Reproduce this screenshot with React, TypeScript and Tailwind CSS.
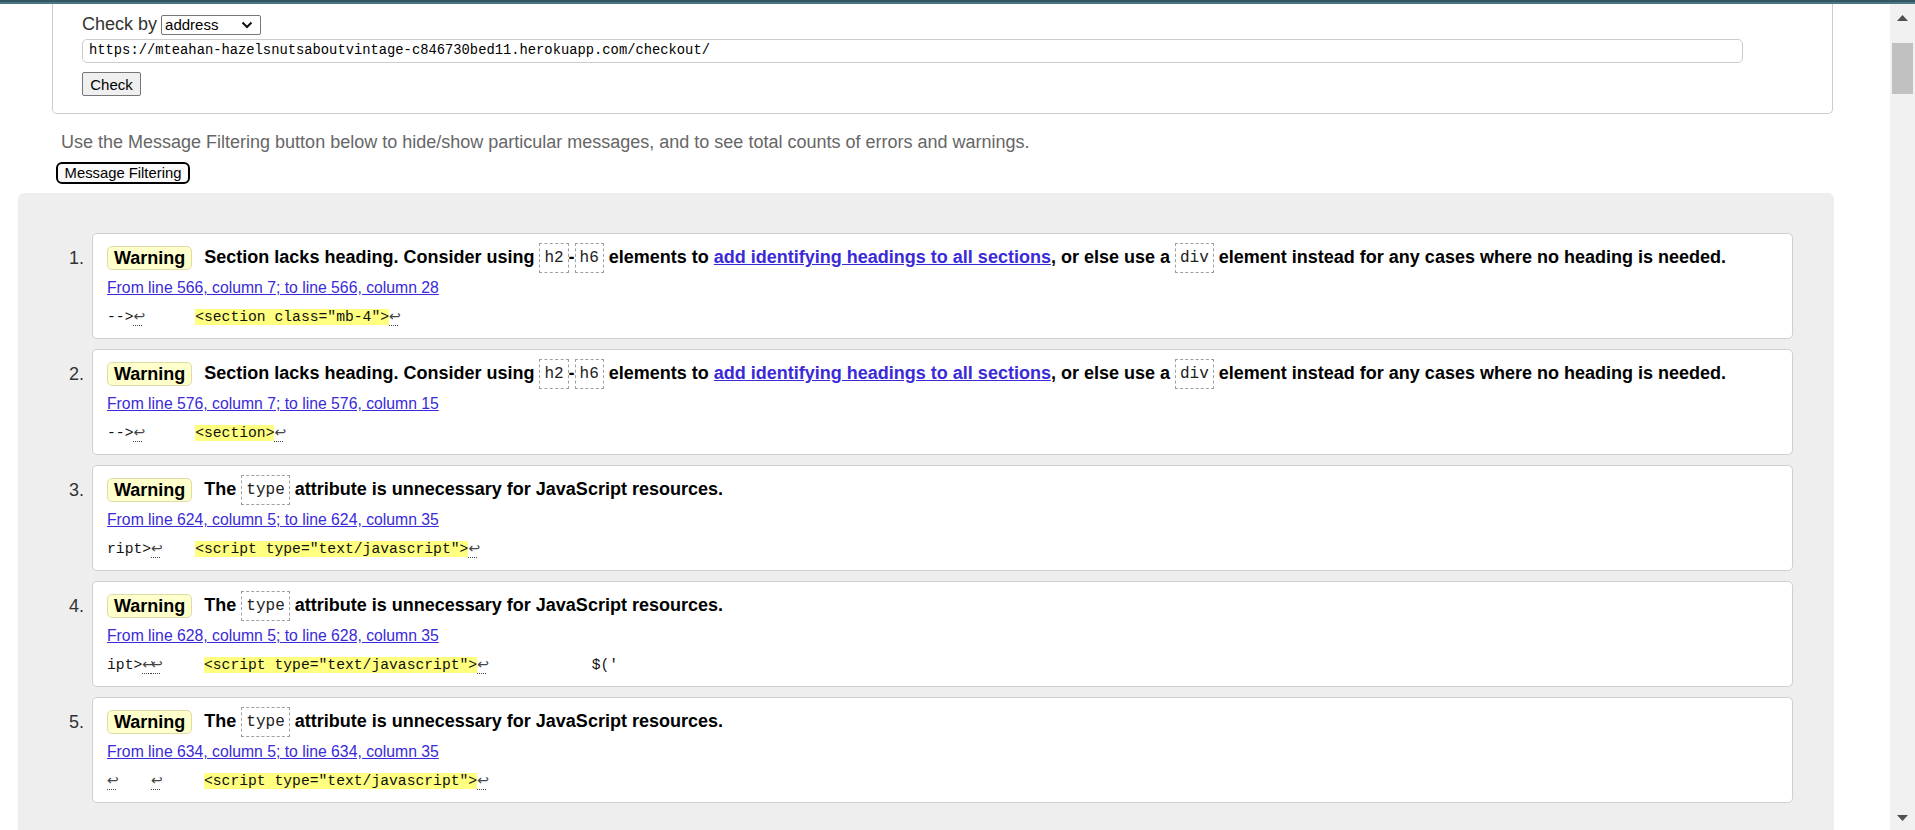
import type { ReactNode } from 'react'

type Seg = { t: string } | { nl: true } | { hl: string }

const NL: Seg = { nl: true }
const SCRIPT = '<script type="text/javascript">'

const results: { from: string; kind: 'section' | 'type'; extract: Seg[] }[] = [
  {
    from: 'From line 566, column 7; to line 566, column 28',
    kind: 'section',
    extract: [{ t: '-->' }, NL, { t: '      ' }, { hl: '<section class="mb-4">' }, NL],
  },
  {
    from: 'From line 576, column 7; to line 576, column 15',
    kind: 'section',
    extract: [{ t: '-->' }, NL, { t: '      ' }, { hl: '<section>' }, NL],
  },
  {
    from: 'From line 624, column 5; to line 624, column 35',
    kind: 'type',
    extract: [{ t: 'ript>' }, NL, { t: '    ' }, { hl: SCRIPT }, NL],
  },
  {
    from: 'From line 628, column 5; to line 628, column 35',
    kind: 'type',
    extract: [{ t: 'ipt>' }, NL, NL, { t: '     ' }, { hl: SCRIPT }, NL, { t: '            $(\'' }],
  },
  {
    from: 'From line 634, column 5; to line 634, column 35',
    kind: 'type',
    extract: [NL, { t: '    ' }, NL, { t: '     ' }, { hl: SCRIPT }, NL],
  },
]

function Code({ children }: { children: ReactNode }) {
  return (
    <code className="inline-block align-middle border border-dashed border-[#a0a0a0] px-[4px] py-[3px] font-['Liberation_Mono',monospace] text-[16px] leading-[22px] font-normal text-[#222]">
      {children}
    </code>
  )
}

function Message({ kind }: { kind: 'section' | 'type' }) {
  if (kind === 'type') {
    return (
      <span>
        The <Code>type</Code> attribute is unnecessary for JavaScript resources.
      </span>
    )
  }
  return (
    <span>
      Section lacks heading. Consider using <Code>h2</Code>-<Code>h6</Code> elements to{' '}
      <a className="text-[#3a2ad8] underline">add identifying headings to all sections</a>, or else use a{' '}
      <Code>div</Code> element instead for any cases where no heading is needed.
    </span>
  )
}

function Extract({ segs }: { segs: Seg[] }) {
  return (
    <code className="whitespace-pre font-['Liberation_Mono',monospace] text-[14.7px] leading-[20px] text-[#111]">
      {segs.map((s, i) =>
        'nl' in s ? (
          <b
            key={i}
            className="inline-block w-[8.8px] font-normal font-['DejaVu_Sans',sans-serif] text-[14px] leading-[18px] text-[#444] border-b border-dotted border-[#444]"
          >
            ↩
          </b>
        ) : 'hl' in s ? (
          <mark key={i} className="bg-[#ffff80] text-[#111]">
            {s.hl}
          </mark>
        ) : (
          <span key={i}>{s.t}</span>
        ),
      )}
    </code>
  )
}

function ScrollArrow({ up }: { up?: boolean }) {
  return (
    <svg width="11" height="6" viewBox="0 0 11 6" className="shrink-0">
      <path d={up ? 'M0 6 L5.5 0 L11 6 Z' : 'M0 0 L11 0 L5.5 6 Z'} fill="#505050" />
    </svg>
  )
}

export default function App() {
  return (
    <div className="h-screen w-full overflow-hidden flex flex-col bg-white font-['Liberation_Sans',Arial,sans-serif] text-[#333]">
      {/* top strip of the browser page */}
      <div className="h-[4px] shrink-0 bg-[#335760] border-b-2 border-[#4b7782]" />

      <div className="flex flex-1 min-h-0">
        <main className="flex-1 min-w-0 flex flex-col">
          {/* ── Check form ───────────────────────────── */}
          <div className="ml-[52px] mr-[57px] border border-t-0 border-[#cccccc] rounded-b-[5px] pl-[29px] pt-[10px] pb-[17px]">
            <div className="flex items-center h-[21px]">
              <span className="text-[18px] leading-[21px] text-[#333]">Check by</span>
              <div className="ml-[4px] w-[100px] h-[20px] border border-[#767676] rounded-[2px] bg-white flex items-center justify-between pl-[3px] pr-[7px]">
                <span className="text-[15px] leading-none text-black">address</span>
                <svg width="12" height="8" viewBox="0 0 12 8">
                  <polyline points="1.5,1.5 6,6 10.5,1.5" fill="none" stroke="#111" strokeWidth="2" />
                </svg>
              </div>
            </div>
            <div className="mt-[4px] w-[1661px] h-[24px] border border-[#cccccc] rounded-[5px] flex items-center px-[6px]">
              <span className="font-['Liberation_Mono',monospace] text-[13.8px] text-black">
                https://mteahan-hazelsnutsaboutvintage-c846730bed11.herokuapp.com/checkout/
              </span>
            </div>
            <button className="block mt-[9px] w-[59px] h-[24px] bg-[#efefef] border border-[#767676] rounded-[2px] text-[15px] text-black leading-none">
              Check
            </button>
          </div>

          <p className="mt-[18px] ml-[61px] text-[18px] leading-[20px] text-[#666]">
            Use the Message Filtering button below to hide/show particular messages, and to see total counts of errors and warnings.
          </p>
          <button className="block mt-[10px] ml-[56px] w-[134px] h-[22px] border-2 border-black rounded-[6px] bg-[#fafafa] text-[14.8px] leading-none text-black">
            Message Filtering
          </button>

          {/* ── Results ─────────────────────────────── */}
          <div className="mt-[9px] ml-[18px] mr-[56px] flex-1 rounded-t-[6px] bg-[#eeeeee] pt-[40px] pr-[41px]">
            {results.map((r, i) => (
              <div key={i} className="flex mb-[10px]">
                <div className="w-[74px] shrink-0 pr-[8px] mt-[12px] h-[26px] leading-[26px] text-right text-[18px] text-[#333]">
                  {i + 1}.
                </div>
                <div className="flex-1 h-[106px] bg-white border border-[#d0d0d0] rounded-[5px] pl-[14px] pt-[11px]">
                  <div className="flex items-center h-[26px] whitespace-nowrap">
                    <span className="inline-flex items-center h-[24px] px-[6px] border border-[#dcdca8] bg-[#ffffcc] rounded-[5px] font-bold text-[18px] text-black">
                      Warning
                    </span>
                    <span className="ml-[12px] font-bold text-[18px] leading-[22px] text-black">
                      <Message kind={r.kind} />
                    </span>
                  </div>
                  <div className="mt-[6px] h-[22px] flex items-center">
                    <a className="text-[15.75px] text-[#3a2ad8] underline">{r.from}</a>
                  </div>
                  <div className="mt-[6px] h-[24px] flex items-center">
                    <Extract segs={r.extract} />
                  </div>
                </div>
              </div>
            ))}
          </div>
        </main>

        {/* page scrollbar */}
        <div className="w-[25px] shrink-0 bg-[#f1f1f1] flex flex-col items-center">
          <div className="mt-[11px]">
            <ScrollArrow up />
          </div>
          <div className="mt-[22px] w-[21px] h-[51px] bg-[#c1c1c1]" />
          <div className="flex-1" />
          <div className="mb-[9px]">
            <ScrollArrow />
          </div>
        </div>
      </div>
    </div>
  )
}
